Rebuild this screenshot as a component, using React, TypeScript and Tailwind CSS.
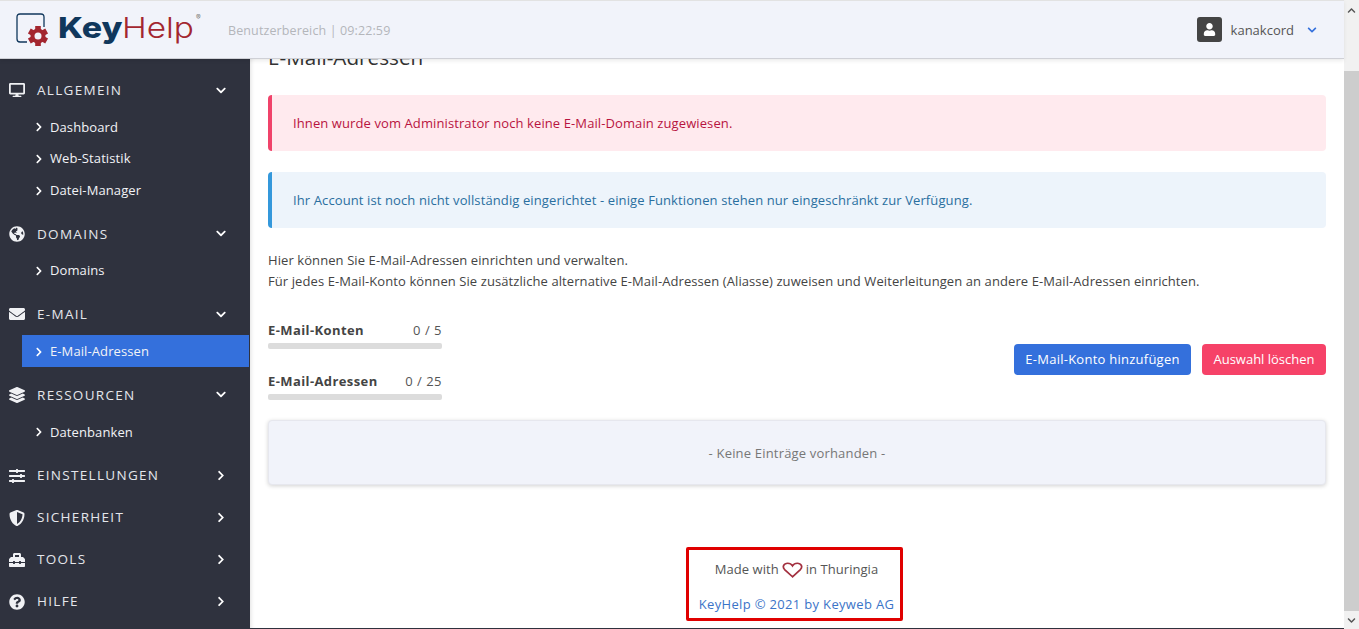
import React from "react";
import {
  FaDesktop, FaGlobeAmericas, FaEnvelope, FaLayerGroup, FaSlidersH, FaShieldAlt, FaToolbox,
  FaQuestionCircle, FaChevronDown, FaChevronRight, FaChevronUp, FaUser,
} from "react-icons/fa";

const font = "font-['Open_Sans','Noto_Sans',sans-serif]";
const teeth = [0, 60, 120, 180, 240, 300];

function Logo() {
  return (
    <div className="flex items-start">
      <svg width="34" height="34" viewBox="0 0 34 34" className="shrink-0">
        <path d="M28 14 V4 Q28 1 25 1 H4 Q1 1 1 4 V26 Q1 29 4 29 H11" fill="none" stroke="#10375c" strokeWidth="1.300" />
        <g transform="translate(22 23)">
          {teeth.map((a) => (
            <rect key={a} x="-2.800" y="-10" width="5.600" height="6" fill="#a3262f" transform={`rotate(${a})`} />
          ))}
          <circle r="7.500" fill="#a3262f" />
          <circle r="3.500" fill="#f1f3fa" />
        </g>
      </svg>
      <div className="ml-[8px] -mt-[3px] flex font-['Inter',sans-serif] text-[29px] leading-[36px]">
        <span className="w-[64px] origin-left scale-x-[1.17] font-extrabold text-[#10375c]">Key</span>
        <span className="w-[73px] origin-left scale-x-[1.15] font-light text-[#a3262f]">Help</span>
        <span className="ml-[1px] text-[7px] leading-[16px] text-[#777]">®</span>
      </div>
    </div>
  );
}

function Group({ icon, label, open, children }: { icon: React.ReactNode; label: string; open?: boolean; children?: React.ReactNode }) {
  return (
    <div className={children ? "pb-[6.900px]" : ""}>
      <div className="flex h-[42px] items-center pl-[9px]">
        <span className="flex w-[16px] justify-center text-[16px] text-[#f0f1f4]">{icon}</span>
        <span className="ml-[12px] flex-1 text-[13.500px] tracking-[1.300px] text-[#e4e6eb]">{label}</span>
        <span className="mr-[24px] flex w-[10px] justify-center text-[11px] text-white">
          {open ? <FaChevronDown /> : <FaChevronRight />}
        </span>
      </div>
      {children}
    </div>
  );
}

function Sub({ label, active }: { label: string; active?: boolean }) {
  return (
    <div className={`ml-[22px] mr-[1px] flex h-[31.670px] items-center pl-[12px] pt-[1px] text-[13px] tracking-[0.1px] text-[#f2f3f6] ${active ? "bg-[#3470dc]" : ""}`}>
      <FaChevronRight className="text-[10px] text-white" />
      <span className="ml-[6px]">{label}</span>
    </div>
  );
}

function Stat({ label, value, className }: { label: string; value: string; className?: string }) {
  return (
    <div className={`w-[174px] ${className ?? ""}`}>
      <div className="flex h-[20px] items-center justify-between pt-[2px] text-[13px] text-[#444]">
        <span className="font-bold tracking-[0.4px]">{label}</span>
        <span className="tracking-[0.5px] text-[#555]">{value}</span>
      </div>
      <div className="mt-[3px] h-[6px] rounded-[2px] bg-[#dcdcdc]" />
    </div>
  );
}

export default function App() {
  return (
    <div className={`${font} flex h-[629px] w-[1359px] overflow-hidden bg-white text-[13px]`}>
      <div className="flex min-w-0 flex-1 flex-col">
        <header className="relative z-10 flex h-[59px] shrink-0 items-center border-t border-b border-t-[#e2e2e2] border-b-[#cfd0d6] bg-[#f1f3fa] shadow-[0_2px_4px_rgba(0,0,0,0.08)]">
          <div className="ml-[16px] flex w-[212px] items-center">
            <Logo />
          </div>
          <span className="mt-[4px] text-[12.500px] tracking-[0.12px] text-[#b4b6bb]">Benutzerbereich | 09:22:59</span>
          <div className="ml-auto mr-[27px] flex items-center">
            <span className="flex h-[25px] w-[25px] items-center justify-center rounded-[3px] bg-[#444]">
              <FaUser className="text-[13px] text-white" />
            </span>
            <span className="ml-[9px] mt-[2px] text-[13px] text-[#555]">kanakcord</span>
            <FaChevronDown className="ml-[13px] text-[10px] text-[#3470dc]" />
          </div>
        </header>

        <div className="flex min-h-0 flex-1">
          <nav className="w-[250px] shrink-0 bg-[#2f323e] pt-[10px]">
            <Group icon={<FaDesktop />} label="ALLGEMEIN" open>
              <Sub label="Dashboard" />
              <Sub label="Web-Statistik" />
              <Sub label="Datei-Manager" />
            </Group>
            <Group icon={<FaGlobeAmericas />} label="DOMAINS" open>
              <Sub label="Domains" />
            </Group>
            <Group icon={<FaEnvelope />} label="E-MAIL" open>
              <Sub label="E-Mail-Adressen" active />
            </Group>
            <Group icon={<FaLayerGroup />} label="RESSOURCEN" open>
              <Sub label="Datenbanken" />
            </Group>
            <Group icon={<FaSlidersH />} label="EINSTELLUNGEN" />
            <Group icon={<FaShieldAlt />} label="SICHERHEIT" />
            <Group icon={<FaToolbox />} label="TOOLS" />
            <Group icon={<FaQuestionCircle />} label="HILFE" />
          </nav>

          <main className="min-w-0 flex-1 overflow-hidden px-[18px] shadow-[inset_4px_0_4px_-3px_rgba(0,0,0,0.12)]">
            <h1 className="-mt-[14px] h-[15px] text-[20.700px] leading-[24px] text-[#333]">E-Mail-Adressen</h1>

            <div className="mt-[35px] flex h-[56px] items-center rounded-[4px] border-l-[4px] border-[#f0436a] bg-[#ffeaee] pl-[21px] pt-[2px] tracking-[0.1px] text-[#b8143f]">
              Ihnen wurde vom Administrator noch keine E-Mail-Domain zugewiesen.
            </div>
            <div className="mt-[21px] flex h-[56px] items-center rounded-[4px] border-l-[4px] border-[#3498db] bg-[#edf4fb] pl-[21px] pt-[2px] tracking-[0.11px] text-[#2a6f9f]">
              Ihr Account ist noch nicht vollständig eingerichtet - einige Funktionen stehen nur eingeschränkt zur Verfügung.
            </div>

            <p className="mt-[22px] leading-[21px] tracking-[0.087px] text-[#444]">
              Hier können Sie E-Mail-Adressen einrichten und verwalten.
              <br />
              Für jedes E-Mail-Konto können Sie zusätzliche alternative E-Mail-Adressen (Aliasse) zuweisen und Weiterleitungen an andere E-Mail-Adressen einrichten.
            </p>

            <div className="mt-[28px] flex items-end justify-between">
              <div>
                <Stat label="E-Mail-Konten" value="0 / 5" />
                <Stat label="E-Mail-Adressen" value="0 / 25" className="mt-[22px]" />
              </div>
              <div className="mb-[25px] flex gap-[11px]">
                <button className="h-[31px] w-[177px] rounded-[4px] bg-[#3470dc] text-[13px] tracking-[0.25px] text-white">E-Mail-Konto hinzufügen</button>
                <button className="h-[31px] w-[124px] rounded-[4px] bg-[#f64268] text-[13px] text-white">Auswahl löschen</button>
              </div>
            </div>

            <div className="mt-[20px] flex h-[65px] items-center justify-center rounded-[4px] border border-[#e6e7ee] bg-[#f1f3fa] pt-[2px] tracking-[0.18px] text-[#777] shadow-[0_1px_4px_rgba(0,0,0,0.18)]">
              - Keine Einträge vorhanden -
            </div>

            <footer className="ml-[418px] mt-[62px] flex h-[74px] w-[217px] flex-col items-center rounded-[2px] border-[3px] border-[#e00000] pl-[4px]">
              <div className="mt-[10px] flex h-[20px] items-center tracking-[0.05px] text-[#555]">
                Made with
                <svg width="21" height="16" viewBox="0 0 24 20" preserveAspectRatio="none" className="mx-[3px]" fill="none" stroke="#a3303f" strokeWidth="2">
                  <path d="M12 18.500 L3 9.500 C0 6 2 1.500 6.500 1.500 C9 1.500 11 3 12 4.800 C13 3 15 1.500 17.500 1.500 C22 1.500 24 6 21 9.500 Z" />
                </svg>
                in Thuringia
              </div>
              <div className="mt-[15px] tracking-[0.33px] text-[#3b74c8]">KeyHelp © 2021 by Keyweb AG</div>
            </footer>
          </main>
        </div>
        <div className="h-[1px] shrink-0 bg-[#2f323e]" />
      </div>

      <div className="flex w-[15px] shrink-0 flex-col bg-[#f1f1f1]">
        <div className="flex h-[71px] shrink-0 justify-center pt-[6px]">
          <FaChevronUp className="text-[9px] text-[#555]" />
        </div>
        <div className="h-[540px] bg-[#cdcdcd]" />
        <div className="flex flex-1 justify-center pt-[5px]">
          <FaChevronDown className="text-[9px] text-[#555]" />
        </div>
      </div>
    </div>
  );
}
